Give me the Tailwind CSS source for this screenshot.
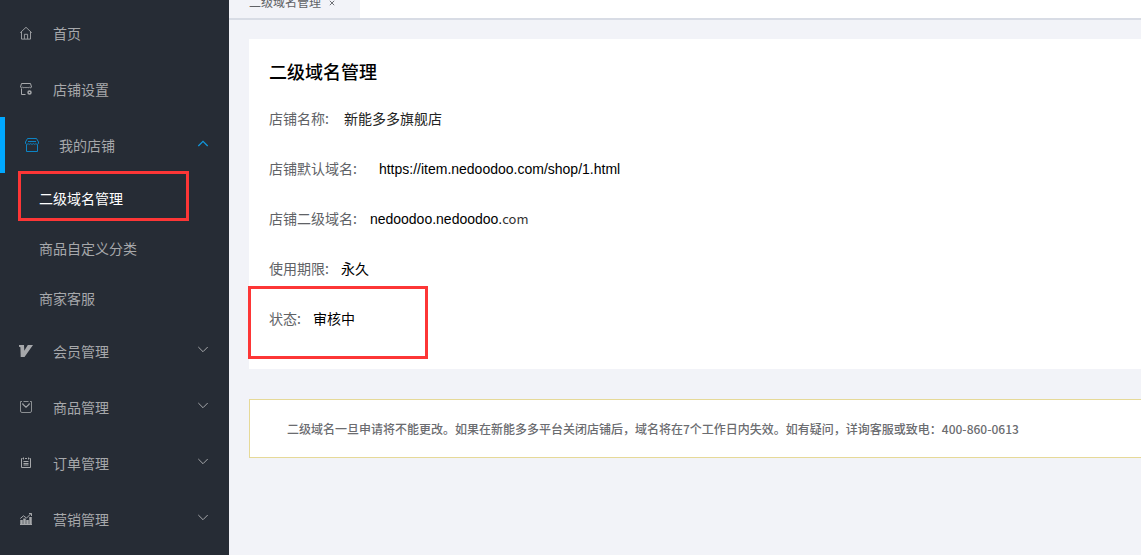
<!DOCTYPE html>
<html lang="zh-CN">
<head>
    <meta charset="UTF-8">
    <meta name="viewport" content="width=device-width, initial-scale=1.0">
    <script src="https://cdn.jsdelivr.net/npm/@tailwindcss/browser@4"></script>
    <title>二级域名管理</title>
</head>
<body class="bg-[#f2f3f8] font-['Noto_Sans_CJK_SC',sans-serif] text-sm flex min-h-screen overflow-hidden">

    <!-- Sidebar -->
    <aside class="w-[229px] shrink-0 bg-[#262c35] text-[#a6a8ab] pt-[5px]">
        <nav>
            <a href="#" class="flex items-center h-14 pl-5">
                <svg class="w-3 h-3.5 mr-[21px]" viewBox="0 0 12 14" fill="none" stroke="currentColor" stroke-width="0.9">
                    <path d="M0.3 6.7 6 1.300l5.700 5.400M1.500 5.900v7.200h9V5.900M4.400 12.900V8.300h3.200v4.600" />
                </svg>
                <span>首页</span>
            </a>
            <a href="#" class="flex items-center h-14 pl-5">
                <svg class="w-3 h-3.5 mr-[21px]" viewBox="0 0 12 14" fill="none" stroke="currentColor">
                    <path d="M1.500 1.500h9l1 3.500c-.3 1-1.500 1-2.200 0-.7 1-1.500 1-2.200 0-.7 1-1.500 1-2.200 0-.7 1-1.500 1-2.200 0-.7 1-1.900 1-2.200 0z" />
                    <path d="M1.500 6.500v6h4" />
                    <circle cx="9.500" cy="10.500" r="1.500" stroke-width="1.500" />
                </svg>
                <span>店铺设置</span>
            </a>
            <a href="#" class="flex items-center h-14 pl-5 border-l-[5px] border-[#00a8ff]">
                <svg class="w-3.5 h-3.5 mr-5 text-[#0d84c4]" viewBox="0 0 14 14" fill="none" stroke="currentColor">
                    <path d="M2.500.5h9l2 3.500v1.500c-.5 1-2 1-2.600 0-.7 1-1.900 1-2.600 0-.7 1-1.900 1-2.600 0-.7 1-1.900 1-2.600 0-.6 1-2.100 1-2.600 0V4z" />
                    <path d="M3 3.500h8M1.500 6.500v7h11v-7" />
                </svg>
                <span>我的店铺</span>
                <svg class="w-3 h-3 ml-auto mr-5 mb-1 text-[#1296db]" viewBox="0 0 12 12" fill="none" stroke="currentColor" stroke-width="1.300">
                    <path d="M1.300 9 6 4.300 10.700 9" />
                </svg>
            </a>

            <div>
                <a href="#" class="relative flex items-center h-[50px] pl-[39px] text-white">
                    二级域名管理
                    <span class="absolute left-[18px] -top-0.5 w-[171px] h-[50px] border-3 border-[#fd3636]"></span>
                </a>
                <a href="#" class="flex items-center h-[50px] pl-[39px]">商品自定义分类</a>
                <a href="#" class="flex items-center h-[50px] pl-[39px]">商家客服</a>
            </div>

            <a href="#" class="flex items-center h-14 pl-[19px]">
                <svg class="w-3.5 h-3.5 mr-5" viewBox="0 0 14 14" fill="currentColor">
                    <path d="M0 1h5l.3 5.800L8.800 1H14L5.500 13H1.700L1.400 3.200 0 2.800z" />
                </svg>
                <span>会员管理</span>
                <svg class="w-3 h-3 ml-auto mr-5 mb-1" viewBox="0 0 12 12" fill="none" stroke="currentColor">
                    <path d="M1.300 4 6 8.700 10.700 4" />
                </svg>
            </a>
            <a href="#" class="flex items-center h-14 pl-5">
                <svg class="w-3 h-3.5 mr-[21px]" viewBox="0 0 12 14" fill="none" stroke="currentColor" stroke-width="0.8">
                    <path d="M3.500 1.500h5M10 1.500h1.500V11a1.500 1.500 0 0 1-1.500 1.500H2A1.500 1.500 0 0 1 .5 11V1.500H2" />
                    <path d="M2.800 3.200v1L6 7.200l3.200-3v-1" stroke-width="1.100" />
                </svg>
                <span>商品管理</span>
                <svg class="w-3 h-3 ml-auto mr-5 mb-1" viewBox="0 0 12 12" fill="none" stroke="currentColor">
                    <path d="M1.300 4 6 8.700 10.700 4" />
                </svg>
            </a>
            <a href="#" class="flex items-center h-14 pl-5">
                <svg class="w-3 h-3.5 mr-[21px]" viewBox="0 0 12 14" fill="none" stroke="currentColor">
                    <path d="M2.500 2.500h-1v9h9v-9h-1M5 2.500h2" />
                    <path d="M3.500 5.500h5M3.500 7.500h5M3.500 9h5M3.500 1.500v2M8.500 1.500v2" />
                </svg>
                <span>订单管理</span>
                <svg class="w-3 h-3 ml-auto mr-5 mb-1" viewBox="0 0 12 12" fill="none" stroke="currentColor">
                    <path d="M1.300 4 6 8.700 10.700 4" />
                </svg>
            </a>
            <a href="#" class="flex items-center h-14 pl-5">
                <svg class="w-3 h-3.5 mr-[21px]" viewBox="0 0 12 14" fill="none" stroke="currentColor">
                    <path d="M0 12.500h12" />
                    <path d="M1.500 12V8M4.500 12V6.500M7.500 12V8M10.500 12V5" stroke-width="2.500" />
                    <path d="M.3 6.500 3.500 3.800l3 2.300 4.800-4.800M9 1.500h2.500V4" />
                </svg>
                <span>营销管理</span>
                <svg class="w-3 h-3 ml-auto mr-5 mb-1" viewBox="0 0 12 12" fill="none" stroke="currentColor">
                    <path d="M1.300 4 6 8.700 10.700 4" />
                </svg>
            </a>
        </nav>
    </aside>

    <main class="flex-1 min-w-0">
        <!-- Opened tabs -->
        <div class="flex items-end h-5 bg-white border-b-2 border-[#d8dce5] overflow-hidden">
            <div class="flex items-center shrink-0 h-8 w-[131px] pl-5 bg-[#f2f3f8] text-xs text-[#606266]">
                <span>二级域名管理</span>
                <button type="button" aria-label="关闭" class="ml-2 pt-0.5">
                    <svg class="w-1.5 h-1.5" viewBox="0 0 6 6" fill="none" stroke="currentColor" stroke-width="0.9">
                        <path d="M.8.8l4.400 4.400M5.200.8.8 5.200" />
                    </svg>
                </button>
            </div>
        </div>

        <section class="mt-[19px] ml-5 px-5 pt-5 pb-[26px] bg-white">
            <h1 class="text-lg leading-6 font-medium text-black mb-2.5">二级域名管理</h1>
            <dl class="text-black">
                <div class="flex items-center h-[50px]">
                    <dt class="text-[#606266]">店铺名称:</dt>
                    <dd class="ml-[15px] text-[#222222]">新能多多旗舰店</dd>
                </div>
                <div class="flex items-center h-[50px]">
                    <dt class="text-[#606266]">店铺默认域名:</dt>
                    <dd class="ml-[22px] pt-0.5 font-['Liberation_Sans',sans-serif]">https://item.nedoodoo.com/shop/1.html</dd>
                </div>
                <div class="flex items-center h-[50px]">
                    <dt class="text-[#606266]">店铺二级域名:</dt>
                    <dd class="ml-[13px] pt-0.5 font-['Liberation_Sans',sans-serif]">nedoodoo.nedoodoo.<span class="font-['Noto_Sans_CJK_SC',sans-serif] text-[13px] text-[#333333]">com</span></dd>
                </div>
                <div class="flex items-center h-[50px]">
                    <dt class="text-[#606266]">使用期限:</dt>
                    <dd class="ml-3">永久</dd>
                </div>
                <div class="relative flex items-center h-[50px]">
                    <dt class="text-[#606266]">状态:</dt>
                    <dd class="ml-3">审核中</dd>
                    <span class="absolute -left-[21px] -top-[7px] w-[180px] h-[73px] border-3 border-[#fd3636]"></span>
                </div>
            </dl>
        </section>

        <p class="mt-[30px] ml-5 pl-[37px] py-5 bg-white border border-r-0 border-[#e6d998] text-xs leading-[17px] font-medium text-[#6b6c70] whitespace-nowrap">二级域名一旦申请将不能更改。如果在新能多多平台关闭店铺后，域名将在7个工作日内失效。如有疑问，详询客服或致电：400-860-0613</p>
    </main>

</body>
</html>
